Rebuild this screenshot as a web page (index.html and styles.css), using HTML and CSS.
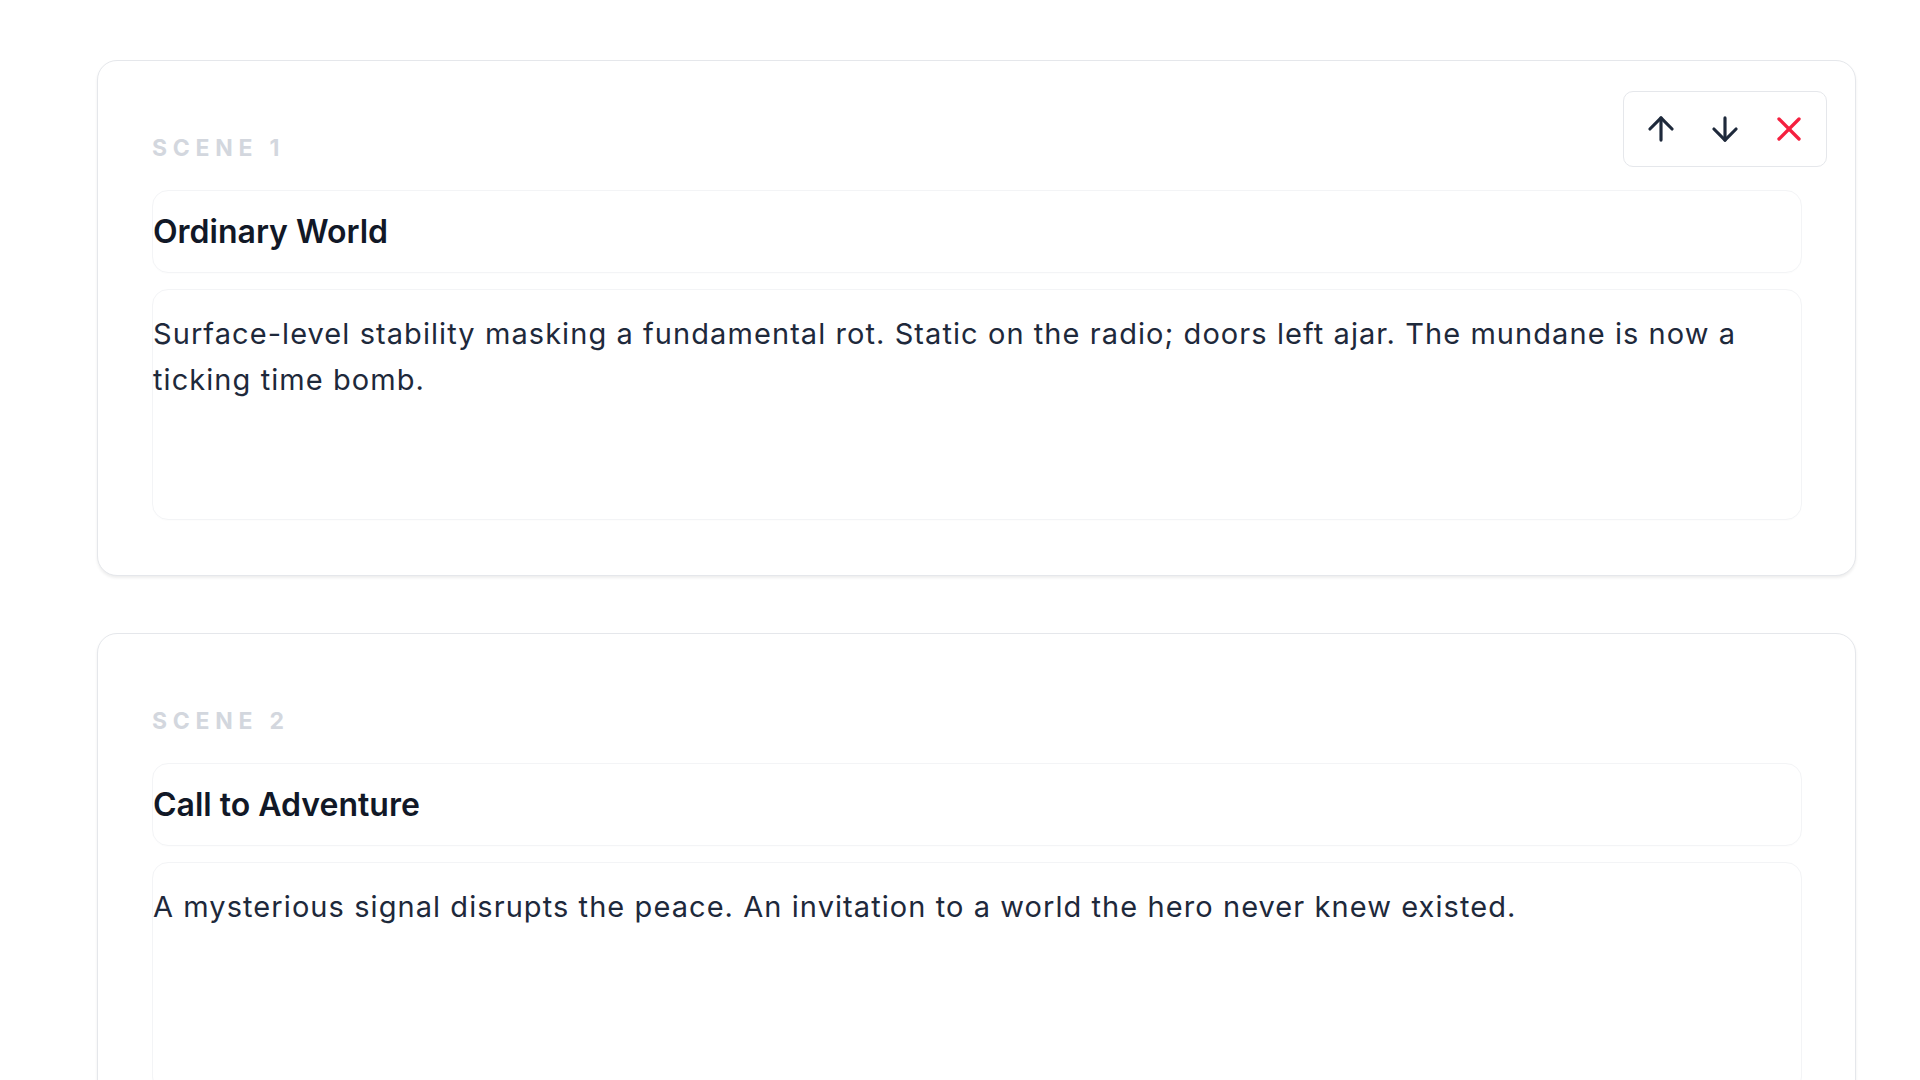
FILE: index.html
```html
<!DOCTYPE html>
<html lang="en">
<head>
<meta charset="utf-8">
<title>Scenes</title>
<link rel="stylesheet" href="styles.css">
</head>
<body>
<main class="scenes">
  <section class="scene-card">
    <div class="scene-toolbar">
      <button class="tool-btn" aria-label="Move up">
        <svg viewBox="0 0 24 24" fill="none" stroke="currentColor" stroke-width="2" stroke-linecap="round" stroke-linejoin="round"><path d="m5 12 7-7 7 7"/><path d="M12 19V5"/></svg>
      </button>
      <button class="tool-btn" aria-label="Move down">
        <svg viewBox="0 0 24 24" fill="none" stroke="currentColor" stroke-width="2" stroke-linecap="round" stroke-linejoin="round"><path d="M12 5v14"/><path d="m19 12-7 7-7-7"/></svg>
      </button>
      <button class="tool-btn tool-delete" aria-label="Delete">
        <svg viewBox="0 0 24 24" fill="none" stroke="currentColor" stroke-width="2" stroke-linecap="round" stroke-linejoin="round"><path d="M18 6 6 18"/><path d="m6 6 12 12"/></svg>
      </button>
    </div>
    <div class="scene-label">Scene 1</div>
    <div class="field field-title">Ordinary World</div>
    <div class="field field-body">Surface-level stability masking a fundamental rot. Static on the radio; doors left ajar. The mundane is now a ticking time bomb.</div>
  </section>
  <section class="scene-card">
    <div class="scene-label">Scene 2</div>
    <div class="field field-title">Call to Adventure</div>
    <div class="field field-body">A mysterious signal disrupts the peace. An invitation to a world the hero never knew existed.</div>
  </section>
</main>
</body>
</html>
```
FILE: styles.css
```css
html, body {
  margin: 0;
  padding: 0;
  background: #ffffff;
}

body {
  font-family: Inter, "Noto Sans", "Liberation Sans", sans-serif;
  color: #1e293b;
}

.scenes {
  display: flex;
  flex-direction: column;
  gap: 57px;
  padding: 60px 64px 0 97px;
}

.scene-card {
  position: relative;
  background: #ffffff;
  border: 1px solid #e5e7eb;
  border-radius: 20px;
  box-shadow: 0 2px 3px rgba(0, 0, 0, 0.07);
  padding: 71px 53px 55px 54px;
  display: flex;
  flex-direction: column;
}

.scene-label {
  font-size: 23px;
  line-height: 28px;
  font-weight: 700;
  letter-spacing: 0.25em;
  text-transform: uppercase;
  color: #d3d7de;
  margin-top: -1px;
  padding-top: 3px;
  margin-bottom: 28px;
}

.field {
  border: 1px solid #f3f4f6;
  border-radius: 16px;
  box-shadow: 0 1px 1px rgba(0, 0, 0, 0.012);
}

.field-title {
  font-size: 32px;
  line-height: 48px;
  font-weight: 600;
  color: #111827;
  padding: 16.5px 0;
  margin-bottom: 16px;
}

.field-body {
  box-sizing: border-box;
  height: 231px;
  font-size: 29px;
  line-height: 46px;
  font-weight: 400;
  letter-spacing: 1.07px;
  color: #1e293b;
  padding: 21px 30px 0 0;
}

.scene-toolbar {
  position: absolute;
  top: 30px;
  right: 28px;
  display: flex;
  padding: 5px;
  border: 1px solid #e5e7eb;
  border-radius: 10px;
  background: #ffffff;
}

.tool-btn {
  width: 64px;
  height: 64px;
  display: flex;
  align-items: center;
  justify-content: center;
  padding: 0;
  border: 0;
  background: transparent;
  color: #1e293b;
}

.tool-btn svg {
  width: 38px;
  height: 38px;
}

.tool-delete {
  color: #f5203f;
}

.tool-delete svg {
  width: 40px;
  height: 40px;
}
```
